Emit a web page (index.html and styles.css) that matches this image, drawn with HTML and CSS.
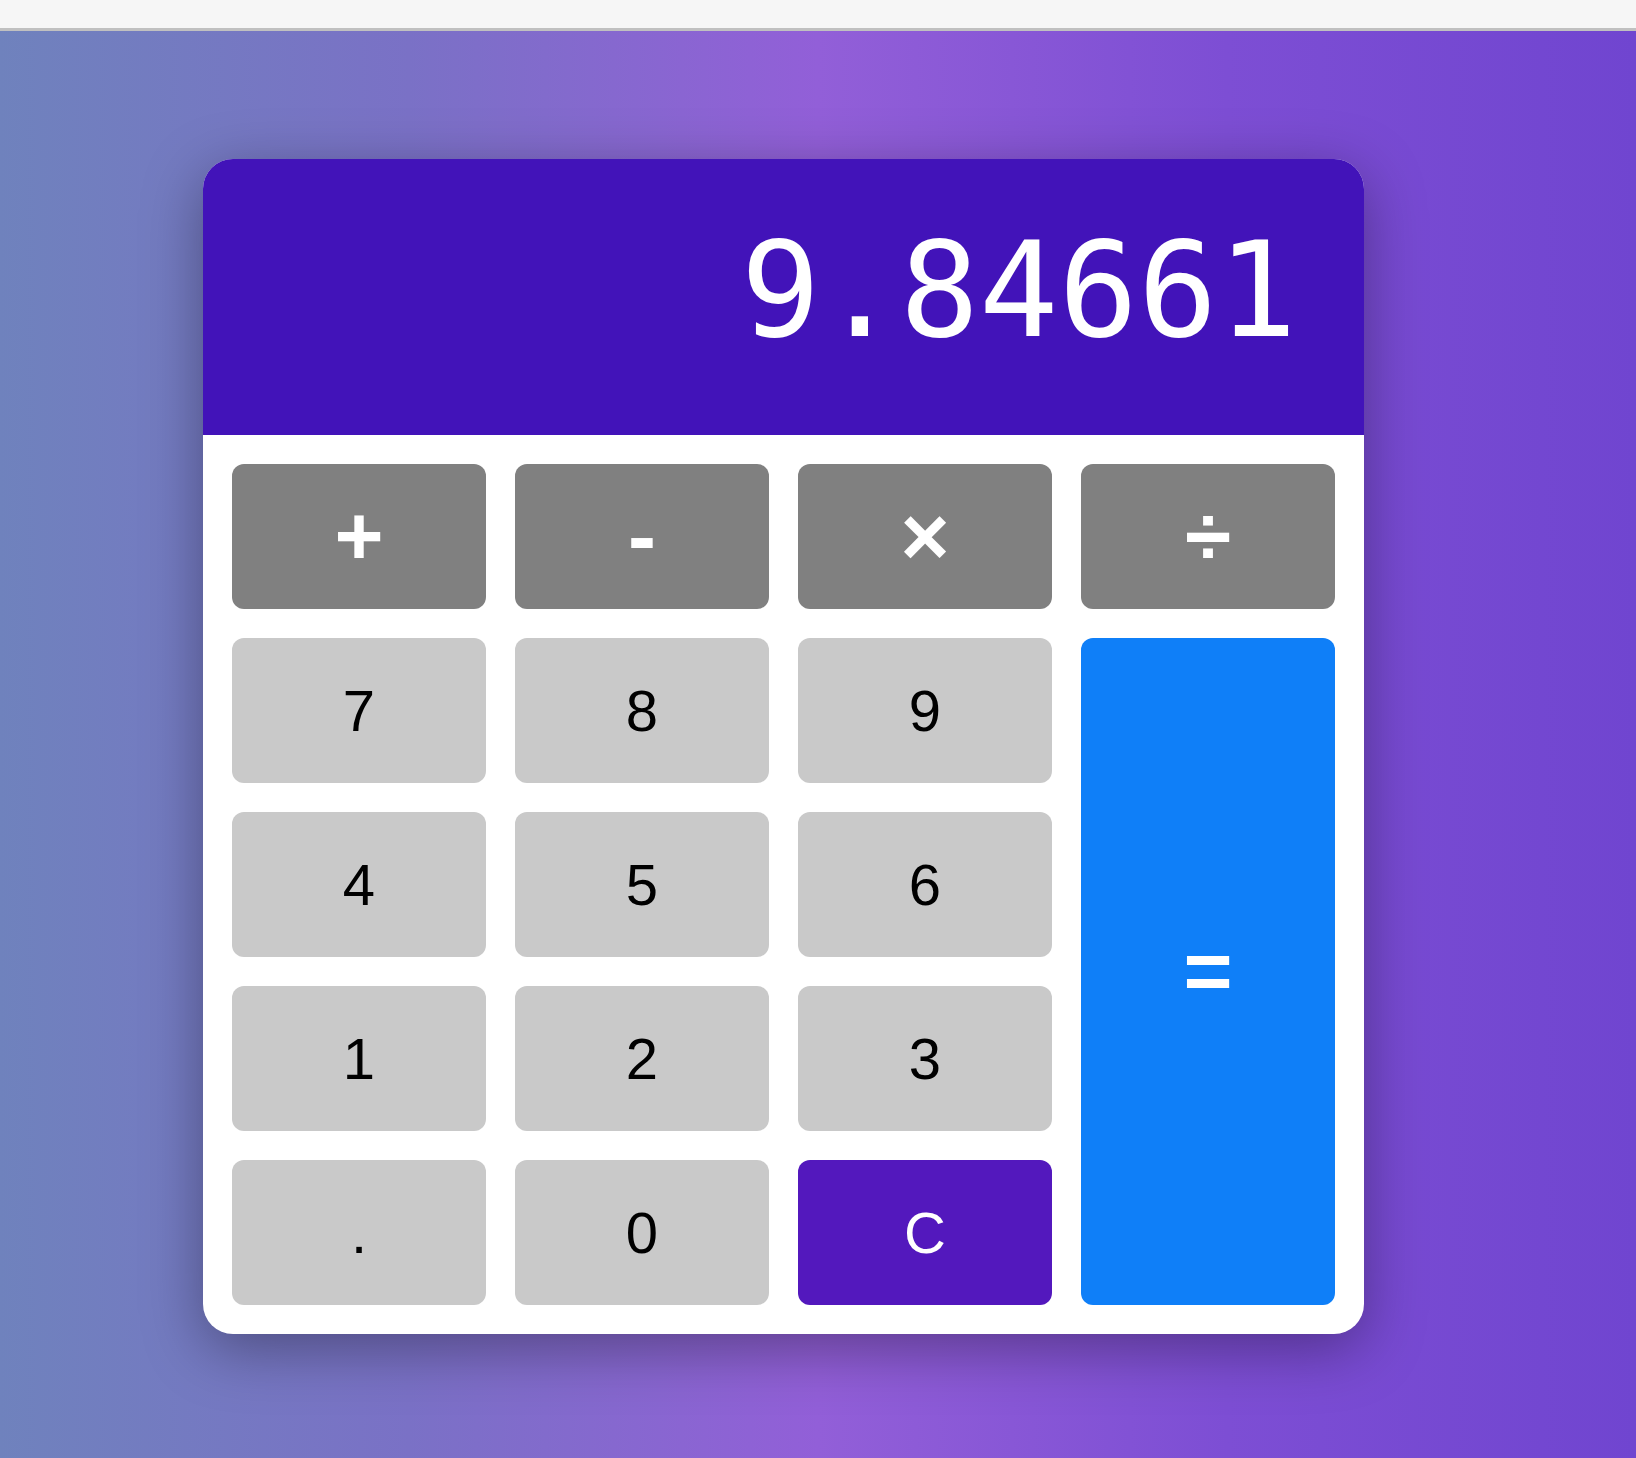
FILE: index.html
```html
<!DOCTYPE html>
<html lang="en">
<head>
<meta charset="utf-8">
<title>Calculator</title>
<link rel="stylesheet" href="styles.css">
</head>
<body>
<div class="topbar"></div>
<main class="stage">
  <div class="calc">
    <div class="display">9.84661</div>
    <div class="keys">
      <button class="key op">+</button>
      <button class="key op">-</button>
      <button class="key op">×</button>
      <button class="key op">÷</button>
      <button class="key num">7</button>
      <button class="key num">8</button>
      <button class="key num">9</button>
      <button class="key eq">=</button>
      <button class="key num">4</button>
      <button class="key num">5</button>
      <button class="key num">6</button>
      <button class="key num">1</button>
      <button class="key num">2</button>
      <button class="key num">3</button>
      <button class="key num">.</button>
      <button class="key num">0</button>
      <button class="key clear">C</button>
    </div>
  </div>
</main>
</body>
</html>
```
FILE: styles.css
```css
html, body {
  margin: 0;
  padding: 0;
}
body {
  width: 1636px;
  height: 1458px;
  overflow: hidden;
  font-family: "Liberation Sans", Arial, sans-serif;
  background: #f6f6f6;
}
.topbar {
  height: 28px;
  background: #f6f6f6;
  border-bottom: 3px solid #c0c0c0;
}
.stage {
  height: 1427px;
  box-sizing: border-box;
  padding: 128px 0 0 203px;
  background: linear-gradient(to right, #6f82bd 0%, #7a71c6 25%, #925fd8 50%, #7d4ed4 75%, #7045d0 100%);
}
.calc {
  width: 1161px;
  background: #ffffff;
  border-radius: 30px;
  overflow: hidden;
  box-shadow: 0 15px 60px rgba(0, 0, 0, 0.35);
}
.display {
  height: 276px;
  box-sizing: border-box;
  padding: 54px 67px 0 0;
  background: #4213b9;
  color: #ffffff;
  text-align: right;
  font-family: "DejaVu Sans Mono", monospace;
  font-size: 132px;
}
.keys {
  display: grid;
  grid-template-columns: repeat(4, 254px);
  grid-template-rows: repeat(5, 145px);
  gap: 29px;
  padding: 29px;
}
.key {
  border: none;
  border-radius: 12px;
  margin: 0;
  padding: 0;
  font-family: "Liberation Sans", Arial, sans-serif;
  font-size: 58px;
  display: flex;
  align-items: center;
  justify-content: center;
}
.num {
  background: #c9c9c9;
  color: #000000;
}
.op {
  background: #808080;
  color: #ffffff;
  font-weight: bold;
  font-size: 84px;
}
.eq {
  grid-column: 4;
  grid-row: 2 / span 4;
  background: #0f7ff8;
  color: #ffffff;
  font-weight: bold;
  font-size: 84px;
}
.clear {
  background: #5318bd;
  color: #ffffff;
}
```
